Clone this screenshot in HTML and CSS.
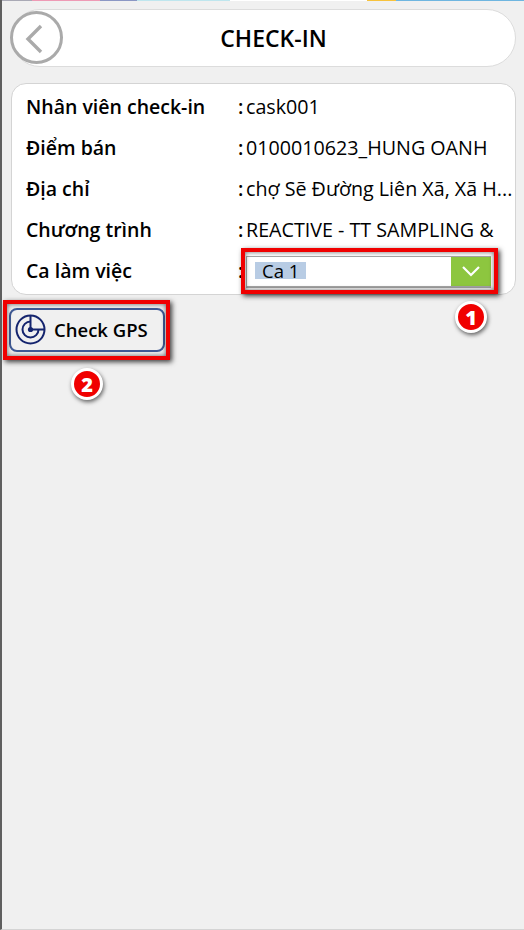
FILE: index.html
```html
<!DOCTYPE html>
<html lang="vi">
<head>
    <meta charset="UTF-8">
    <meta name="viewport" content="width=device-width, initial-scale=1.0">
    <title>Check-in</title>
    <link rel="stylesheet" href="styles.css">
</head>
<body>
    <div class="top-strip">
        <span class="s1"></span><span class="s2"></span><span class="s3"></span><span class="s4"></span><span class="s5"></span><span class="s7"></span><span class="s8"></span>
    </div>
    <div class="screen">
        <header class="header">
            <button class="back-btn" aria-label="Back">
                <svg width="46" height="46" viewBox="0 0 46 46"><path d="M27 11 L14 24 L27 37" fill="none" stroke="#aaa" stroke-width="3.4"/></svg>
            </button>
            <h1>CHECK-IN</h1>
        </header>

        <div class="card">
            <div class="row"><span class="label">Nhân viên check-in</span><span class="colon">:</span><span class="value">cask001</span></div>
            <div class="row"><span class="label">Điểm bán</span><span class="colon">:</span><span class="value">0100010623_HUNG OANH</span></div>
            <div class="row"><span class="label">Địa chỉ</span><span class="colon">:</span><span class="value">chợ Sẽ Đường Liên Xã, Xã H...</span></div>
            <div class="row"><span class="label">Chương trình</span><span class="colon">:</span><span class="value">REACTIVE - TT SAMPLING &amp;</span></div>
            <div class="row"><span class="label">Ca làm việc</span><span class="colon">:</span>
                <div class="select">
                    <span class="select-text"><span class="selected">Ca 1</span></span>
                    <span class="select-arrow">
                        <svg width="20" height="12" viewBox="0 0 20 12"><path d="M2 2 L10 10 L18 2" fill="none" stroke="#fff" stroke-width="2.2"/></svg>
                    </span>
                </div>
            </div>
        </div>

        <button class="gps-btn">
            <svg width="31" height="31" viewBox="0 0 31 31" fill="none" stroke="#14246e" stroke-width="2">
                <circle cx="15.5" cy="15.5" r="14"/>
                <path d="M15.5 2 V15.5 H29"/>
                <path d="M15.5 7.5 A8 8 0 1 0 23.5 15.5"/>
                <circle cx="15.5" cy="15.5" r="2.6" fill="#14246e" stroke="none"/>
            </svg>
            <span>Check GPS</span>
        </button>
    </div>

    <div class="mark mark-select"></div>
    <div class="mark mark-gps"></div>
    <div class="badge badge-1">1</div>
    <div class="badge badge-2">2</div>
</body>
</html>
```
FILE: styles.css
```css
* { box-sizing: border-box; }
html, body { height: 100%; }
body { margin: 0; background-color: #f0f0f0; font-family: 'Open Sans', 'Liberation Sans', sans-serif; color: #000; position: relative; overflow: hidden; border-left: 2px solid #5f5f5f; border-bottom: 1px solid #d4d4d4; }
.top-strip { display: flex; height: 1px; margin-left: -2px; }
.top-strip span { display: block; height: 1px; }
.s1 { width: 32px; background-color: #a9a9b5; }
.s2 { width: 68px; background-color: #ee9ab5; }
.s3 { width: 37px; background-color: #8b97c4; }
.s4 { width: 93px; background-color: #bfe6ee; }
.s5 { width: 137px; background-color: #fff; }
.s7 { width: 29px; background-color: #f7c23c; }
.s8 { width: 128px; background-color: #6fb6e0; }

.screen { padding: 8px 8px 0 9px; display: flex; flex-direction: column; align-items: flex-start; }

.header { position: relative; width: 505px; height: 58px; background-color: #fff; border: 1px solid #dcdcdc; border-radius: 29px; display: flex; align-items: center; justify-content: center; }
.header h1 { margin: 0 0 1px 20px; font-size: 23px; font-weight: 600; }
.back-btn { position: absolute; left: -2px; top: 1px; width: 53px; height: 53px; padding: 0; background: #fff; border: 3px solid #aaa; border-radius: 50%; display: flex; align-items: center; justify-content: center; }

.card { width: 505px; height: 212px; margin-top: 16px; padding: 2px 14px 0; background-color: #fff; border: 1px solid #d4d4d4; border-radius: 15px; }
.row { display: flex; align-items: center; height: 41px; font-size: 19.5px; }
.label { width: 212px; flex: none; font-weight: 600; }
.colon { width: 8px; flex: none; font-weight: 600; }
.value { width: 266px; flex: none; font-size: 19.7px; white-space: nowrap; overflow: hidden; }

.select { display: flex; width: 245px; height: 32px; margin: 2px 0 0; border: 1px solid #a6a6a6; border-width: 1px 0 2px 1px; background-color: #fff; }
.select-text { flex: 1; padding: 0 0 2px 8px; font-size: 18.5px; display: flex; align-items: center; }
.selected { background-color: #b8cce4; line-height: 17px; padding: 0 7px; }
.select-arrow { width: 40px; background-color: #8dc63f; display: flex; align-items: center; justify-content: center; }

.gps-btn { display: flex; align-items: center; gap: 8px; width: 156px; height: 44px; margin: 13px 0 0 -2px; padding: 0 0 2px 4px; background-color: #f0f0f0; border: 2px solid #3f5a96; border-radius: 8px; font-family: inherit; font-size: 18.5px; font-weight: 600; color: #000; }

/* annotations on top of the screenshot */
.mark { position: absolute; border: 4px solid #f00000; box-shadow: 2px 2px 5px rgba(0, 0, 0, 0.75), inset 0 0 5px rgba(0, 0, 0, 0.6); }
.mark-select { left: 239px; top: 248px; width: 257px; height: 46px; }
.mark-gps { left: 1px; top: 300px; width: 167px; height: 60px; }
.badge { position: absolute; width: 32px; height: 32px; border-radius: 50%; background-color: #f00000; border: 3px solid #fff; box-shadow: 1px 2px 4px rgba(0, 0, 0, 0.6); color: #fff; font-size: 20px; font-weight: 800; display: flex; align-items: center; justify-content: center; }
.badge-1 { left: 453px; top: 301px; }
.badge-2 { left: 69px; top: 368px; }
```
